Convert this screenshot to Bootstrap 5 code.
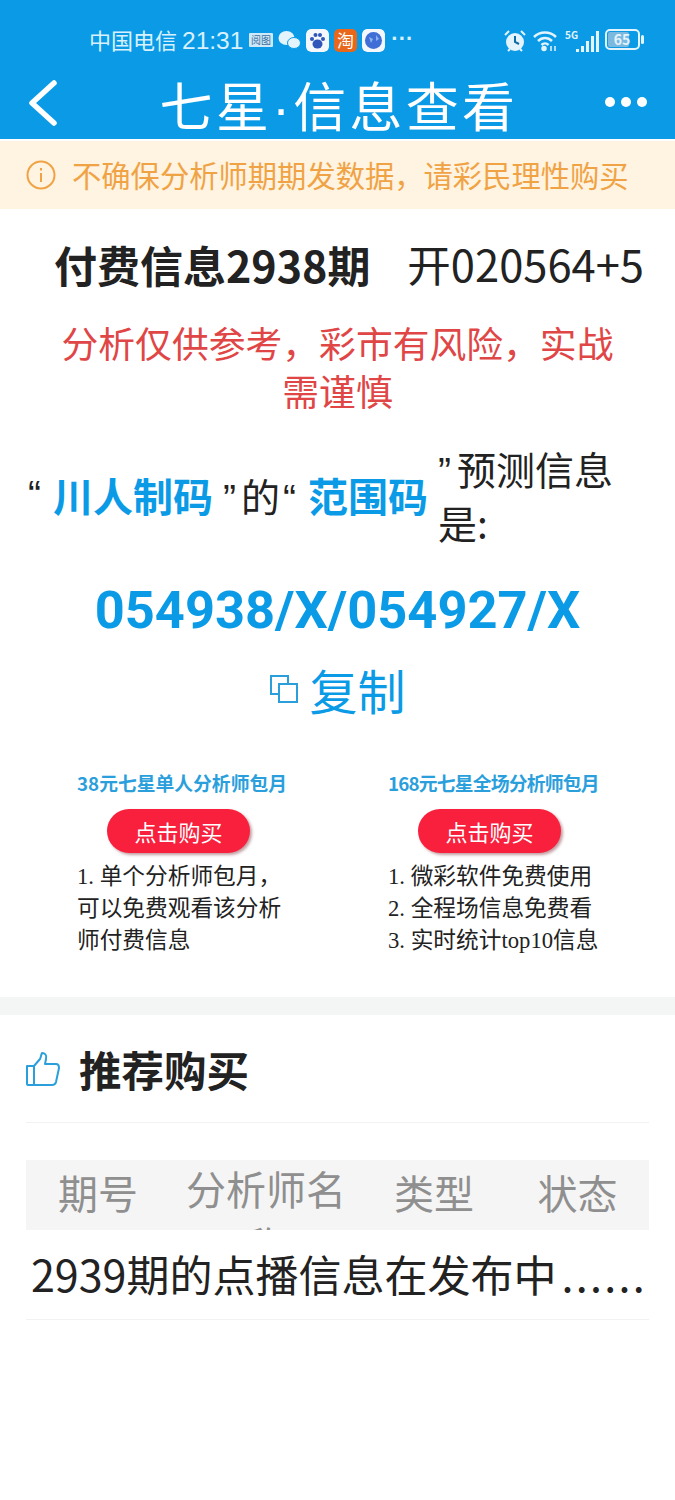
<!DOCTYPE html>
<html lang="zh-CN">
<head>
    <meta charset="UTF-8">
    <meta name="viewport" content="width=device-width, initial-scale=1.0">
    <title>七星·信息查看</title>
    <link href="https://cdn.jsdelivr.net/npm/bootstrap@5.3.0/dist/css/bootstrap.min.css" rel="stylesheet">
    <style>
        body {
            font-family: "Noto Sans CJK SC", "Noto Sans", sans-serif;
            background-color: #fff;
            color: #222;
            width: 675px;
            height: 1500px;
            overflow: hidden;
        }
        .top-area { background-color: #0b9be6; height: 139px; color: #fff; }
        .status-row { height: 79px; padding: 25px 30px 0 89px; font-size: 22px; color: #d9f1fd; line-height: 28px; }
        .status-row .app-ico { width: 23px; height: 23px; border-radius: 5px; display: block; }
        .status-left { gap: 5px; }
        .status-time { font-family: "Liberation Sans", sans-serif; font-size: 24.500px; margin: 0 1px 0 5px; line-height: 0; }
        .status-more { font-family: "Liberation Sans", sans-serif; font-size: 22px; font-weight: 700; margin-left: 1px; }
        .status-right { gap: 6px; }
        .title-row { height: 55px; padding: 0 28px; }
        .back-ico { margin-top: -7px; }
        .page-title { font-size: 53px; line-height: 60px; letter-spacing: 3.300px; white-space: nowrap; margin-left: 15px; }
        .title-dot { font-family: "Liberation Sans", sans-serif; }
        .more-dots { gap: 6px; margin-top: -10px; }
        .more-dots i { width: 10px; height: 10px; border-radius: 50%; background: #fff; display: block; }
        .notice-band { margin-top: 2px; height: 68px; background-color: #fff3e1; color: #f0a345; font-size: 29.300px; padding: 0 26px; gap: 16px; white-space: nowrap; }
        .info-head { padding: 26px 31px 0 54px; height: 88px; line-height: 58px; white-space: nowrap; }
        .info-head b { font-size: 43px; font-weight: 700; }
        .open-code { font-size: 43.500px; }
        .warn-text { color: #e04646; font-size: 36.800px; line-height: 48px; padding: 21px 50px 0; text-align: center; }
        .predict-row { padding: 27px 0 0 28px; font-size: 39px; line-height: 54px; color: #222; white-space: nowrap; }
        .predict-row b { color: #0b9be6; font-size: 40px; margin: 0 10px 0 12px; }
        .quote-mark { font-family: "Liberation Sans", sans-serif; line-height: 0; }
        .quote-after { margin-right: 5px; }
        .quote-before { margin-left: 3px; }
        .quote-end { margin-right: 6px; }
        .predict-end { width: 180px; white-space: normal; }
        .code-line { color: #0b9be6; font-size: 52.400px; font-weight: 700; text-align: center; line-height: 60px; margin-top: 31px; font-family: Roboto, sans-serif; }
        .copy-line { color: #0b9be6; font-size: 48px; line-height: 60px; margin-top: 19px; gap: 10px; }
        .plans { padding: 50px 0 0 0; height: 278px; }
        .plan-box { width: 312px; padding-left: 77px; }
        .plan-box + .plan-box { padding-left: 76px; }
        .plan-name { color: #2a9fdc; font-size: 18.800px; font-weight: 700; line-height: 28px; white-space: nowrap; }
        .plan-name-long { letter-spacing: -.8px; }
        .buy-btn { background-color: #f8203c; color: #fff; width: 143px; height: 44px; border: 0; border-radius: 22px; font-size: 22px; line-height: 44px; padding: 0; margin: 12px 0 0 30px; box-shadow: 2px 2px 3px rgba(120, 40, 50, .45); display: block; }
        .plan-desc { font-family: "Liberation Serif", "Noto Sans CJK SC", serif; font-size: 22.700px; line-height: 32px; margin-top: 8px; color: #222; white-space: nowrap; }
        .gap-band { height: 18px; background-color: #f4f5f5; }
        .recommend-head { margin: 0 26px; height: 108px; border-bottom: 1px solid #f2f2f2; gap: 19px; font-size: 42.500px; font-weight: 700; }
        .rec-table { margin: 37px 26px 0; }
        .rec-thead { background-color: #f5f5f5; height: 70px; overflow: hidden; color: #8f8f8f; font-size: 40px; line-height: 50px; text-align: center; }
        .rec-thead .th-a { width: 144px; padding-top: 7px; }
        .rec-thead .th-b { width: 192px; line-height: 56px; }
        .rec-thead .th-c { width: 144px; padding-top: 7px; }
        .rec-thead .th-d { width: 143px; padding-top: 7px; }
        .rec-row { height: 90px; border-bottom: 1px solid #f2f2f2; font-size: 43px; line-height: 86px; padding-left: 5px; color: #222; white-space: nowrap; }
        .rec-dots { letter-spacing: 2.300px; margin-left: 5px; }
    </style>
</head>
<body>
    <div class="top-area">
        <div class="status-row d-flex justify-content-between">
            <div class="status-left d-flex align-items-start">
                <span>中国电信<span class="status-time">21:31</span></span>
                <svg class="mt-2" width="24" height="14" viewBox="0 0 24 14"><rect width="24" height="14" rx="1" fill="#cfe9f8"/><text x="12" y="11" font-size="10" text-anchor="middle" fill="#3c6f9e">阅图</text></svg>
                <svg class="mt-1" width="23" height="22" viewBox="0 0 23 22" fill="#e3f4fd"><ellipse cx="8.500" cy="9" rx="8" ry="7"/><ellipse cx="16" cy="14" rx="6.500" ry="5.500" stroke="#0b9be6"/></svg>
                <svg class="app-ico mt-1" viewBox="0 0 23 23"><rect width="23" height="23" rx="5" fill="#f4f8fc"/><ellipse cx="11.500" cy="15" rx="5" ry="4.500" fill="#2f56b8"/><circle cx="6" cy="10" r="2" fill="#2f56b8"/><circle cx="9.500" cy="6" r="2" fill="#2f56b8"/><circle cx="14" cy="6" r="2" fill="#2f56b8"/><circle cx="17" cy="10" r="2" fill="#2f56b8"/></svg>
                <svg class="app-ico mt-1" viewBox="0 0 23 23"><rect width="23" height="23" rx="4" fill="#e8671a"/><text x="11.500" y="18" font-size="17" text-anchor="middle" fill="#fff">淘</text></svg>
                <svg class="app-ico mt-1" viewBox="0 0 23 23"><rect width="23" height="23" rx="5" fill="#f4f8fc"/><circle cx="11.500" cy="11.500" r="8.500" fill="#3f6fd6"/><path d="M7 8l4 2-2 4zM14 6l3 4-3 2z" fill="#8fb0ee"/></svg>
                <span class="status-more">···</span>
            </div>
            <div class="status-right d-flex align-items-start">
                <svg class="mt-1" width="24" height="24" viewBox="0 0 24 24"><circle cx="12" cy="13" r="9" fill="#e3f4fd"/><path d="M12 7v6l4 2" stroke="#0b6ca8" stroke-width="2" fill="none"/><path d="M2 6l4-4M22 6l-4-4M5 22l2-2M19 22l-2-2" stroke="#e3f4fd" stroke-width="2"/></svg>
                <svg class="mt-1" width="26" height="24" viewBox="0 0 26 24" fill="none" stroke="#e3f4fd" stroke-width="2.500"><path d="M1 8c6-6 16-6 22 0M5 12c4-4 10-4 14 0M8.500 16c2-2 5-2 7 0"/><circle cx="11" cy="19.500" r="1.500" fill="#e3f4fd"/><path d="M18 17v5M22 17v5" stroke-width="1.500"/></svg>
                <svg class="mt-1" width="34" height="24" viewBox="0 0 34 24" fill="#e3f4fd"><text x="0" y="10" font-size="10" font-weight="700">5G</text><rect x="11" y="20" width="3" height="3"/><rect x="16" y="17" width="3" height="6"/><rect x="21" y="12" width="3" height="11"/><rect x="26" y="7" width="3" height="16"/><rect x="31" y="2" width="3" height="21"/></svg>
                <svg class="mt-1" width="40" height="22" viewBox="0 0 40 22"><rect x="1" y="1" width="33" height="19" rx="4" fill="none" stroke="#e3f4fd" stroke-width="2"/><rect x="3" y="3" width="21" height="15" rx="2" fill="#7db8de"/><text x="17" y="16" font-size="14" font-weight="700" text-anchor="middle" fill="#e3f4fd">65</text><rect x="36" y="6" width="3" height="9" rx="1.500" fill="#e3f4fd"/></svg>
            </div>
        </div>
        <div class="title-row d-flex justify-content-between align-items-center">
            <svg class="back-ico" width="30" height="48" viewBox="0 0 30 48" fill="none" stroke="#fff" stroke-width="5.500" stroke-linecap="round" stroke-linejoin="round"><path d="M26 4L4 24l22 20"/></svg>
            <div class="page-title">七星<span class="title-dot">·</span>信息查看</div>
            <div class="more-dots d-flex"><i></i><i></i><i></i></div>
        </div>
    </div>

    <div class="notice-band d-flex align-items-center">
        <svg width="30" height="30" viewBox="0 0 30 30" fill="none" stroke="#f0a345" stroke-width="2"><circle cx="15" cy="15" r="13.500"/><path d="M15 13v9M15 8v2.500"/></svg>
        <span>不确保分析师期期发数据，请彩民理性购买</span>
    </div>

    <div class="info-head d-flex justify-content-between">
        <b>付费信息2938期</b>
        <span class="open-code">开020564+5</span>
    </div>
    <div class="warn-text">分析仅供参考，彩市有风险，实战需谨慎</div>

    <div class="predict-row d-flex align-items-center">
        <span class="quote-mark">“</span><b>川人制码</b><span><span class="quote-mark quote-after">”</span>的<span class="quote-mark quote-before">“</span></span><b>范围码</b><span class="predict-end"><span class="quote-mark quote-end">”</span>预测信息是:</span>
    </div>
    <div class="code-line">054938/X/054927/X</div>
    <div class="copy-line d-flex justify-content-center align-items-center">
        <svg width="30" height="30" viewBox="0 0 30 30" fill="none" stroke="#2a9fdc" stroke-width="2"><path d="M10 20H2V2h17v8"/><rect x="10" y="10" width="18" height="18" fill="#fff"/></svg>
        <span>复制</span>
    </div>

    <div class="plans d-flex">
        <div class="plan-box">
            <div class="plan-name">38元七星单人分析师包月</div>
            <button class="buy-btn" type="button">点击购买</button>
            <div class="plan-desc">1. 单个分析师包月，<br>可以免费观看该分析<br>师付费信息</div>
        </div>
        <div class="plan-box">
            <div class="plan-name plan-name-long">168元七星全场分析师包月</div>
            <button class="buy-btn" type="button">点击购买</button>
            <div class="plan-desc">1. 微彩软件免费使用<br>2. 全程场信息免费看<br>3. 实时统计top10信息</div>
        </div>
    </div>
    <div class="gap-band"></div>

    <div class="recommend-head d-flex align-items-center">
        <svg width="34" height="34" viewBox="0 0 34 34" fill="#fff" stroke="#2a9fdc" stroke-width="2" stroke-linejoin="round"><path d="M1 14h7v19H2a1 1 0 0 1-1-1zM8 14l6-7c1-2 1-4 2-6 3 0 5 2 4 6l-1 5h11c2 0 3 2 3 4l-3 14c-.5 2-2 3-4 3H8z"/></svg>
        <span>推荐购买</span>
    </div>

    <div class="rec-table">
        <div class="rec-thead d-flex">
            <div class="th-a">期号</div>
            <div class="th-b">分析师名称</div>
            <div class="th-c">类型</div>
            <div class="th-d">状态</div>
        </div>
        <div class="rec-row">2939期的点播信息在发布中<span class="rec-dots">......</span></div>
    </div>
</body>
</html>
